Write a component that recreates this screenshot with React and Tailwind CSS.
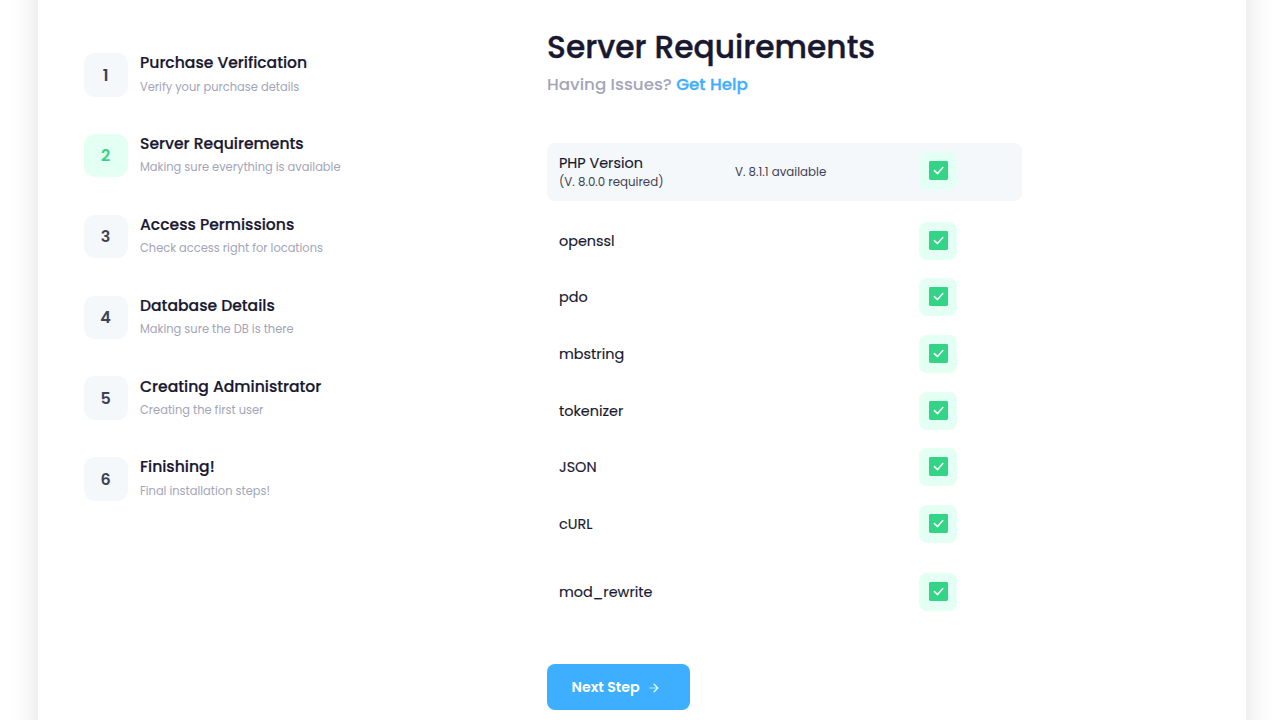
const steps = [
  { title: 'Purchase Verification', note: 'Verify your purchase details' },
  { title: 'Server Requirements', note: 'Making sure everything is available', active: true },
  { title: 'Access Permissions', note: 'Check access right for locations' },
  { title: 'Database Details', note: 'Making sure the DB is there' },
  { title: 'Creating Administrator', note: 'Creating the first user' },
  { title: 'Finishing!', note: 'Final installation steps!' },
];

const extensions = ['openssl', 'pdo', 'mbstring', 'tokenizer', 'JSON', 'cURL'];

function CheckBadge() {
  return (
    <span className="flex h-[38px] w-[38px] shrink-0 justify-center rounded-lg bg-[#e4fff4] pt-[9px]">
      <svg viewBox="0 0 19 19" className="h-[19px] w-[19px]" fill="none">
        <rect width="19" height="19" rx="1.4" fill="#34d487" />
        <path d="M5.4 9.6 L8.6 12.6 L13.8 6.6" stroke="#fff" strokeWidth="1.5" strokeLinecap="round" strokeLinejoin="round" />
      </svg>
    </span>
  );
}

function Step({ index, step }) {
  return (
    <li className="flex h-[80.8px] items-start">
      <span
        className={
          step.active
            ? 'flex h-[43.5px] w-11 shrink-0 items-center justify-center rounded-[11px] bg-[#e4fff4] pt-[1.4px] text-base font-semibold text-[#34d487]'
            : 'flex h-[43.5px] w-11 shrink-0 items-center justify-center rounded-[11px] bg-[#f4f8fb] pt-[1.4px] text-base font-semibold text-[#3f4254]'
        }
      >
        {index}
      </span>
      <div className="ml-[12.4px] pt-[0.3px] whitespace-nowrap">
        <h3 className="text-[15.6px] leading-5 font-medium text-[#181830] [-webkit-text-stroke:0.2px]">{step.title}</h3>
        <p className="mt-[3.2px] text-[11.45px] leading-5 text-[#a3a5b8]">{step.note}</p>
      </div>
    </li>
  );
}

function Extension({ name, className }) {
  return (
    <li className={`flex items-center pl-3 ${className}`}>
      <span className="w-[360.4px] text-[14.4px] leading-5 text-[#181830] [-webkit-text-stroke:0.15px]">{name}</span>
      <CheckBadge />
    </li>
  );
}

export default function App() {
  return (
    <div className="h-screen overflow-hidden bg-white pr-[34px] pl-[38px] font-['Poppins','Inter',sans-serif]">
      <main className="-mt-10 flex h-[800px] bg-white pt-10 shadow-[0_0_28px_rgba(0,0,0,0.125)]">
        <ol className="w-[509px] pt-[53.2px] pl-[45.6px]">
          {steps.map((step, i) => (
            <Step key={step.title} index={i + 1} step={step} />
          ))}
        </ol>
        <section className="w-[475px] pt-[27px]">
          <h1 className="text-[31.25px] leading-10 font-medium whitespace-nowrap text-[#181830] [-webkit-text-stroke:0.4px]">Server Requirements</h1>
          <p className="mt-[3px] text-[16.7px] leading-7 font-medium whitespace-nowrap text-[#a3a5b8]">
            <span>Having Issues?</span>{' '}
            <a className="text-[#3eafff] [-webkit-text-stroke:0.3px]">Get Help</a>
          </p>
          <div className="mt-[44.8px] flex h-[58px] items-center rounded-lg bg-[#f4f8fb] pl-3">
            <div className="w-44 pt-[1.6px] whitespace-nowrap">
              <p className="text-[14.4px] leading-5 text-[#181830] [-webkit-text-stroke:0.15px]">PHP Version</p>
              <p className="-mt-[0.4px] text-[11.8px] leading-5 text-[#3f4254]">(V. 8.0.0 required)</p>
            </div>
            <p className="w-[184.4px] pt-[1.4px] text-[11.8px] whitespace-nowrap text-[#3f4254]">V. 8.1.1 available</p>
            <div className="pb-px">
              <CheckBadge />
            </div>
          </div>
          <ul className="mt-[11.7px]">
            {extensions.map((name) => (
              <Extension key={name} name={name} className="h-[56.6px]" />
            ))}
            <Extension name="mod_rewrite" className="h-[80.4px]" />
          </ul>
          <button className="mt-[31.8px] flex h-[46px] w-[143.4px] items-center rounded-lg bg-[#3eafff] pl-[24.5px] text-[14.2px] font-semibold text-white">
            <span>Next Step</span>
            <svg viewBox="0 0 10 10" className="mt-0.5 ml-[9px] h-2.5 w-2.5" fill="none" stroke="#fff" strokeLinecap="round" strokeLinejoin="round">
              <path d="M0.6 5 H8.6" strokeWidth="1" opacity="0.7" />
              <path d="M5 1.2 L8.8 5 L5 8.8" strokeWidth="1.2" />
            </svg>
          </button>
        </section>
      </main>
    </div>
  );
}
